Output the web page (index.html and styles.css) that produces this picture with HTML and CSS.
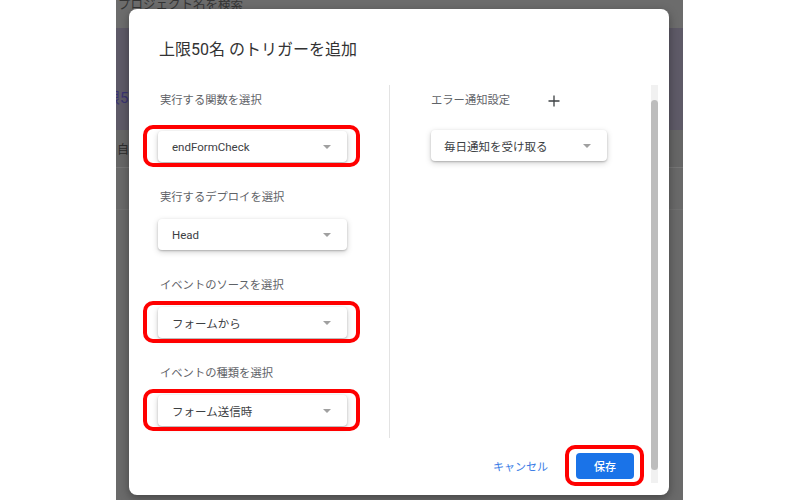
FILE: index.html
```html
<!DOCTYPE html>
<html lang="ja">
<head>
<meta charset="utf-8">
<title>トリガーを追加</title>
<link rel="stylesheet" href="styles.css">
</head>
<body>
<div class="page">
  <div class="backdrop">
    <div class="app">
      <div class="app-search"><span>プロジェクト名を検索</span></div>
      <div class="app-hero"><span>上限50名</span></div>
      <div class="app-tabs"><span>自動</span></div>
      <div class="app-row"></div>
      <div class="app-rest"></div>
    </div>
    <div class="dialog">
      <h1 class="dialog-title">上限50名 のトリガーを追加</h1>
      <div class="dialog-main">
        <div class="dialog-scroll">
          <div class="dialog-body">
            <div class="col col-left">
              <div class="field field-first">
                <div class="label">実行する関数を選択</div>
                <div class="select marked"><span>endFormCheck</span><i class="caret"></i></div>
              </div>
              <div class="field">
                <div class="label">実行するデプロイを選択</div>
                <div class="select"><span>Head</span><i class="caret"></i></div>
              </div>
              <div class="field">
                <div class="label">イベントのソースを選択</div>
                <div class="select marked"><span>フォームから</span><i class="caret"></i></div>
              </div>
              <div class="field">
                <div class="label">イベントの種類を選択</div>
                <div class="select marked"><span>フォーム送信時</span><i class="caret"></i></div>
              </div>
            </div>
            <div class="divider"></div>
            <div class="col col-right">
              <div class="notify-head">
                <span class="label">エラー通知設定</span>
                <svg class="plus" width="12" height="12" viewBox="0 0 12 12"><path d="M6 0.5V11.5M0.5 6H11.5" stroke="#3c4043" stroke-width="1.3" fill="none"/></svg>
              </div>
              <div class="select select-narrow"><span>毎日通知を受け取る</span><i class="caret"></i></div>
            </div>
          </div>
          <div class="dialog-footer">
            <button class="btn-text">キャンセル</button>
            <button class="btn-primary">保存</button>
          </div>
        </div>
        <div class="scrollbar"><div class="thumb"></div></div>
      </div>
    </div>
  </div>
</div>
</body>
</html>
```
FILE: styles.css
```css
* { box-sizing: border-box; }
html, body { margin: 0; padding: 0; background: #fff; }
body {
  font-family: Roboto, "Noto Sans CJK JP", "Noto Sans", sans-serif;
  color: #3c4043;
}
.page {
  width: 800px;
  height: 500px;
  display: flex;
  padding-left: 116px;
  overflow: hidden;
}
.backdrop {
  position: relative;
  width: 567px;
  height: 500px;
  overflow: hidden;
  background: #6a6a6a;
}
.app { display: flex; flex-direction: column; height: 100%; }
.app-search {
  height: 28px;
  background: #6c6c6c;
  font-size: 12.5px;
  line-height: 10px;
  color: #353535;
  padding-left: 2px;
  white-space: nowrap;
}
.app-hero {
  height: 102px;
  background: #5e5a67;
  padding-top: 61px;
  line-height: 18px;
  font-size: 15px;
  color: #3a3372;
  white-space: nowrap;
}
.app-hero span { margin-left: -26px; }
.app-tabs {
  height: 38px;
  background: #666666;
  padding-top: 11px;
  padding-left: 1px;
  line-height: 18px;
  font-size: 12px;
  color: #2c2c2c;
  border-bottom: 1px solid #767676;
}
.app-row { height: 42px; background: #696969; border-bottom: 1px solid #707070; }
.app-rest { flex: 1; background: #6a6a6a; }

.dialog {
  position: absolute;
  left: 13px;
  top: 9px;
  width: 540px;
  height: 486px;
  background: #fff;
  border-radius: 8px;
  box-shadow: 0 3px 10px rgba(0,0,0,0.35);
  display: flex;
  flex-direction: column;
}
.dialog-title {
  margin: 0 0 25px;
  padding: 31px 0 0 30px;
  font-size: 16px;
  line-height: 20px;
  font-weight: 400;
  color: #333;
}
.dialog-main { display: flex; height: 398px; }
.dialog-scroll { flex: 1; display: flex; flex-direction: column; }
.dialog-body { display: flex; height: 353px; }
.col { padding-top: 7px; }
.col-left { width: 260px; padding-left: 29px; }
.col-right { flex: 1; padding-left: 41px; }
.divider { width: 1px; background: #e3e3e3; }

.label {
  font-size: 11.3px;
  line-height: 18px;
  color: #5f6368;
  padding-left: 2px;
}
.field .label { margin-bottom: 12px; }
.field-first .label { margin-bottom: 21px; }
.field + .field { margin-top: 27px; }

.select {
  position: relative;
  width: 189px;
  height: 31px;
  display: flex;
  align-items: center;
  justify-content: space-between;
  padding: 0 16px 0 14px;
  background: #fff;
  border-radius: 4px;
  box-shadow: 0 1px 2px rgba(0,0,0,0.22), 0 2px 6px rgba(0,0,0,0.18);
  font-size: 11.5px;
  color: #3c4043;
}
.select-narrow { width: 176px; margin-top: 20px; padding-left: 13px; }
.caret {
  width: 0;
  height: 0;
  border-left: 4.5px solid transparent;
  border-right: 4.5px solid transparent;
  border-top: 4.5px solid #a0a0a0;
}
.marked::after {
  content: "";
  position: absolute;
  top: -6px;
  bottom: -5px;
  left: -15px;
  right: -13px;
  border: 4px solid #ff0000;
  border-radius: 10px;
  pointer-events: none;
}
.notify-head { display: flex; align-items: center; height: 18px; }
.notify-head .label { padding-left: 0; }
.plus { margin-left: 38px; }

.dialog-footer {
  display: flex;
  justify-content: flex-end;
  align-items: center;
  margin-top: 15px;
  padding-right: 17px;
}
.btn-text {
  border: 0;
  background: none;
  padding: 0;
  margin-right: 28px;
  font-family: inherit;
  font-size: 11px;
  color: #3b7de6;
}
.btn-primary {
  position: relative;
  width: 58px;
  height: 26px;
  border: 0;
  border-radius: 4px;
  background: #1a73e8;
  color: #fff;
  font-family: inherit;
  font-size: 11px;
  font-weight: 500;
}
.btn-primary::after {
  content: "";
  position: absolute;
  top: -8px;
  bottom: -7px;
  left: -11px;
  right: -10px;
  border: 4px solid #ff0000;
  border-radius: 10px;
}
.scrollbar {
  width: 7px;
  margin-right: 11px;
  background: #f1f1f1;
  display: flex;
  flex-direction: column;
  padding: 15px 0 13px;
}
.thumb { flex: 1; background: #bdbdbd; border-radius: 4px; }
```
